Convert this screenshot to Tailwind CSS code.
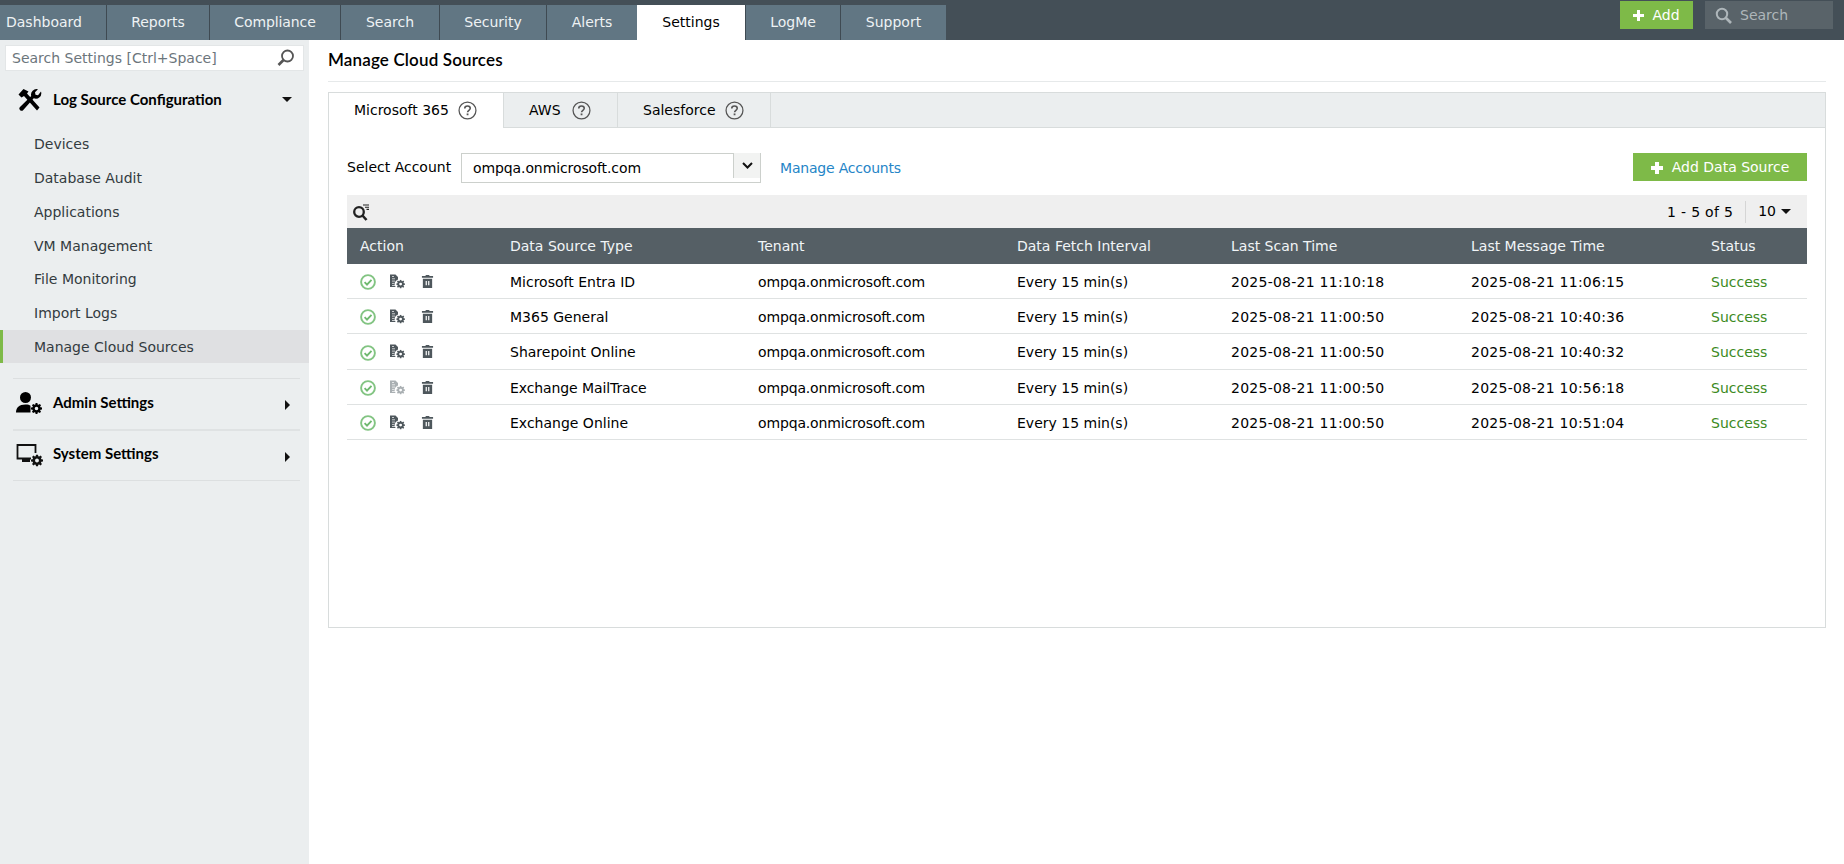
<!DOCTYPE html>
<html lang="en">
<head>
    <meta charset="UTF-8" />
    <title>Manage Cloud Sources</title>
    <script src="https://cdn.jsdelivr.net/npm/@tailwindcss/browser@4"></script>
</head>
<body class="h-[864px] overflow-hidden bg-white font-['DejaVu_Sans',sans-serif] text-[14px] text-black">
    <!-- shared icons -->
    <svg class="hidden">
        <symbol id="gear" viewBox="0 0 16 16">
            <path fill-rule="evenodd" d="M6.7 0h2.6l.4 2.2 1.2.5L12.8 1.4l1.8 1.8-1.3 1.9.5 1.2 2.2.4v2.6l-2.2.4-.5 1.2 1.3 1.9-1.8 1.8-1.9-1.3-1.2.5-.4 2.2H6.7l-.4-2.2-1.2-.5-1.9 1.3-1.8-1.8 1.3-1.9-.5-1.2L0 9.3V6.7l2.2-.4.5-1.2-1.3-1.9 1.8-1.8 1.9 1.3 1.2-.5zM8 5.4a2.6 2.6 0 1 0 0 5.2 2.6 2.6 0 0 0 0-5.2z"/>
        </symbol>
        <symbol id="help" viewBox="0 0 18 18">
            <circle cx="9" cy="9" r="8" fill="none" stroke="#555" stroke-width="1.2"/>
            <path d="M6.400 7.100c0-1.500 1.100-2.400 2.600-2.400s2.600.9 2.600 2.200c0 1.900-2.500 1.900-2.500 3.700" fill="none" stroke="#555" stroke-width="1.500"/>
            <rect x="8.200" y="11.800" width="1.700" height="1.700" fill="#555"/>
        </symbol>
        <symbol id="check" viewBox="0 0 16 16">
            <circle cx="8" cy="8" r="6.900" fill="none" stroke="#82c482" stroke-width="1.900"/>
            <path d="M4.600 8.200l2.400 2.400 4.500-4.700" fill="none" stroke="#6fb96f" stroke-width="1.900"/>
        </symbol>
        <symbol id="config" viewBox="0 0 15 15">
            <path d="M0 .5h5.500L8 3v2.500A4.800 4.800 0 0 0 5.600 13H0z"/>
            <path d="M2 2.500h2M2 4.800h3M2 7.100h3M2 9.400h2.500M2 11.500h3" stroke="#fff" stroke-width=".7"/>
            <use href="#gear" x="6.200" y="5.700" width="8.800" height="8.800"/>
        </symbol>
        <symbol id="trash" viewBox="0 0 12 14">
            <path d="M4 0h4v1h4v2H0V1h4zM1 4h10v10H1zM4 6.500v4.500h1.300V6.500zM6.700 6.500v4.500H8V6.500z" fill-rule="evenodd"/>
        </symbol>
    </svg>

    <!-- top bar -->
    <header class="flex h-10 items-end justify-between bg-[#444f57]">
        <nav class="flex h-[35px] text-[#eef2f4]">
            <a class="flex w-[107px] items-center border-r border-[#3f4a52] bg-[#617683] pl-[6px]">Dashboard</a>
            <a class="flex w-[103px] items-center justify-center border-r border-[#3f4a52] bg-[#617683]">Reports</a>
            <a class="flex w-[131px] items-center justify-center border-r border-[#3f4a52] bg-[#617683] tracking-[-.1px]">Compliance</a>
            <a class="flex w-[99px] items-center justify-center border-r border-[#3f4a52] bg-[#617683]">Search</a>
            <a class="flex w-[107px] items-center justify-center border-r border-[#3f4a52] bg-[#617683]">Security</a>
            <a class="flex w-[90px] items-center justify-center bg-[#617683]">Alerts</a>
            <a class="flex w-[109px] items-center justify-center border-r border-[#3f4a52] bg-white text-black">Settings</a>
            <a class="flex w-[95px] items-center justify-center border-r border-[#3f4a52] bg-[#617683]">LogMe</a>
            <a class="flex w-[105px] items-center justify-center bg-[#617683]">Support</a>
        </nav>
        <div class="flex h-10 items-start pt-px pr-[11px]">
            <button class="flex h-[28px] w-[73px] items-center justify-center gap-[8px] bg-[#7eba48] text-white">
                <svg class="size-[11px]" viewBox="0 0 11 11" fill="#fff"><path d="M4 0h3v4h4v3H7v4H4V7H0V4h4z"/></svg>
                Add
            </button>
            <div class="ml-3 flex h-[28px] w-[128px] items-center gap-[8px] bg-[#596369] pl-[10px] text-[#aeb6ba]">
                <svg class="size-[17px]" viewBox="0 0 17 17" fill="none" stroke="#aeb6ba"><circle cx="7" cy="7" r="5.200" stroke-width="2"/><path d="M11 11l5 5" stroke-width="2.600"/></svg>
                Search
            </div>
        </div>
    </header>

    <div class="flex h-[824px]">
        <!-- sidebar -->
        <aside class="w-[309px] shrink-0 bg-[#ebeeef] text-[#333b40]">
            <div class="mx-[5px] mt-[5px] flex h-[26px] w-[299px] items-center justify-between border border-[#e3e6e7] bg-white pr-[8px] pl-[6px] text-[#6c767c]">
                <span class="pt-px">Search Settings [Ctrl+Space]</span>
                <svg class="size-[18px]" viewBox="0 0 18 18" fill="none" stroke="#555"><circle cx="10.500" cy="7" r="5.500" stroke-width="1.800"/><path d="M6.500 11L1.500 16" stroke-width="2.600"/></svg>
            </div>

            <div class="relative mt-[13px] flex h-[31px] items-center font-['Lato',sans-serif] text-[15px] font-bold text-black">
                <svg class="ml-[18px] size-[24px]" viewBox="0 0 24 24">
                    <path d="M5.500 1L10.500 3.500 9 5.500 21.500 19.500 19 22.500 6 8 3.500 9.500.500 6.500z"/>
                    <path d="M23 3.500a5.500 5.500 0 0 1-7.300 6.800L5.300 22a2 2 0 0 1-3.300-3l11.200-11A5.500 5.500 0 0 1 20 1.300l-3 3 .5 2.500 2.500.5z"/>
                </svg>
                <span class="ml-[11px]">Log Source Configuration</span>
                <span class="absolute top-[13px] left-[282px] size-0 border-x-[5.500px] border-t-[5px] border-x-transparent border-t-[#111]"></span>
            </div>

            <ul class="mt-[12px] flex flex-col">
                <li class="flex h-[34px] items-center pl-[34px]">Devices</li>
                <li class="flex h-[34px] items-center pl-[34px]">Database Audit</li>
                <li class="flex h-[34px] items-center pl-[34px]">Applications</li>
                <li class="flex h-[34px] items-center pl-[34px]">VM Management</li>
                <li class="flex h-[33px] items-center pl-[34px]">File Monitoring</li>
                <li class="flex h-[34px] items-center pl-[34px]">Import Logs</li>
                <li class="flex h-[33px] items-center border-l-[3px] border-[#7eba48] bg-[#dfe0e2] pt-[2px] pl-[31px]">Manage Cloud Sources</li>
            </ul>

            <div class="mt-[15px] mr-[9px] ml-[13px] border-t border-[#dcdfe0]"></div>
            <div class="relative flex h-[50px] items-center font-['Lato',sans-serif] text-[15px] font-bold text-black">
                <svg class="ml-[16px] size-[26px]" viewBox="0 0 26 26">
                    <circle cx="9.500" cy="6.500" r="5.500"/>
                    <path d="M0 21.500c0-5 3-8 9.500-8 2.500 0 4 .5 5 1.200v6.800z"/>
                    <use href="#gear" x="15" y="12" width="11" height="11"/>
                </svg>
                <span class="ml-[11px] -mt-[4px]">Admin Settings</span>
                <span class="absolute top-[21px] left-[285px] size-0 border-y-[5px] border-l-[5px] border-y-transparent border-l-[#111]"></span>
            </div>
            <div class="mr-[9px] ml-[13px] border-t-2 border-[#dfe2e3]"></div>
            <div class="relative flex h-[49px] items-center font-['Lato',sans-serif] text-[15px] font-bold text-black">
                <svg class="ml-[16px] size-[27px]" viewBox="0 0 27 27" fill="none">
                    <path d="M15 16.500H1.500V3h18v8" stroke="#111" stroke-width="1.800"/>
                    <path d="M6 20h8v-3H6z" fill="#111"/>
                    <use href="#gear" x="15" y="12.500" width="12" height="12" fill="#111"/>
                </svg>
                <span class="ml-[10px] -mt-[4px]">System Settings</span>
                <span class="absolute top-[21px] left-[285px] size-0 border-y-[5px] border-l-[5px] border-y-transparent border-l-[#111]"></span>
            </div>
            <div class="mr-[9px] ml-[13px] border-t border-[#dcdfe0]"></div>
        </aside>

        <!-- main -->
        <main class="ml-[19px] w-[1498px]">
            <h1 class="flex h-[42px] items-center border-b border-[#e6e9ea] pb-[1px] font-['Lato',sans-serif] text-[17px] font-semibold tracking-[.15px]">Manage Cloud Sources</h1>

            <section class="mt-[10px] h-[536px] border border-[#d8dcdc]">
                <div class="flex h-[35px] border-b border-[#d8dcdc] bg-[#ebeeef]">
                    <div class="-mb-px flex h-[35px] w-[175px] items-center gap-[9px] border-r border-[#d8dcdc] bg-white pl-[25px]">
                        Microsoft 365
                        <svg class="size-[19px]"><use href="#help"/></svg>
                    </div>
                    <div class="flex w-[114px] items-center gap-[11px] border-r border-[#d8dcdc] pl-[25px]">
                        AWS
                        <svg class="size-[19px]"><use href="#help"/></svg>
                    </div>
                    <div class="flex w-[153px] items-center gap-[9px] border-r border-[#d8dcdc] pl-[25px]">
                        Salesforce
                        <svg class="size-[19px]"><use href="#help"/></svg>
                    </div>
                </div>

                <div class="px-[18px]">
                    <div class="mt-[25px] flex h-[30px] items-center">
                        <span class="-mt-[2px] w-[114px]">Select Account</span>
                        <div class="flex h-[30px] w-[300px] items-center border border-[#ccd0cc] pl-[11px] text-sm tracking-[-.1px]">
                            <span class="flex-1">ompqa.onmicrosoft.com</span>
                            <span class="flex h-[25px] w-[27px] -translate-y-[1px] items-center justify-center self-start border-l border-[#ccd0cc] bg-[#f2f3f2]">
                                <svg class="size-[11px]" viewBox="0 0 11 11" fill="none" stroke="#111" stroke-width="2"><path d="M1 3l4.500 4.500L10 3"/></svg>
                            </span>
                        </div>
                        <a class="ml-[19px] tracking-[-.2px] text-[#2585c7]">Manage Accounts</a>
                        <button class="ml-auto -mt-[2px] flex h-[28px] w-[174px] items-center justify-center gap-[9px] bg-[#7eba48] pt-px text-white">
                            <svg class="size-[12px]" viewBox="0 0 12 12" fill="#fff"><path d="M4 0h4v4h4v4H8v4H4V8H0V4h4z"/></svg>
                            Add Data Source
                        </button>
                    </div>

                    <div class="mt-[12px] flex h-[33px] items-center justify-between bg-[#efefef] pr-[16px] pl-[5px]">
                        <svg class="size-[18px]" viewBox="0 0 18 18" fill="none" stroke="#222">
                            <circle cx="7" cy="9" r="4.800" stroke-width="2.300"/>
                            <path d="M10.500 12.500l4 4.500" stroke-width="2.600"/>
                            <path d="M11 2h6M13 4.200h4M14.500 6.400h2.500" stroke-width="1.100"/>
                        </svg>
                        <div class="flex items-center">
                            <span class="pt-[2px] tracking-[.3px]">1 - 5 of 5</span>
                            <span class="mx-[12px] h-[22px] border-l border-[#d5d5d5]"></span>
                            <span>10</span>
                            <span class="ml-[5px] size-0 border-x-[5px] border-t-[5px] border-x-transparent border-t-[#111]"></span>
                        </div>
                    </div>

                    <table class="w-[1460px] table-fixed border-collapse">
                        <colgroup>
                            <col class="w-[150px]"><col class="w-[261px]"><col class="w-[259px]"><col class="w-[214px]"><col class="w-[240px]"><col class="w-[240px]"><col class="w-[96px]">
                        </colgroup>
                        <thead class="bg-[#555f65] text-left text-[#f1f5f7]">
                            <tr class="h-[36px]">
                                <th class="pl-[13px] font-normal">Action</th>
                                <th class="pl-[13px] font-normal">Data Source Type</th>
                                <th class="font-normal">Tenant</th>
                                <th class="font-normal">Data Fetch Interval</th>
                                <th class="font-normal">Last Scan Time</th>
                                <th class="font-normal">Last Message Time</th>
                                <th class="font-normal">Status</th>
                            </tr>
                        </thead>
                        <tbody class="[&_td]:pt-[3px]">
                            <tr class="h-[34px] border-b border-[#dfe2e2]">
                                <td class="pl-[13px]"><span class="flex items-center"><svg class="size-[16px]"><use href="#check"/></svg><svg class="ml-[14px] size-[15px] -translate-y-[1px] fill-[#4e575c]"><use href="#config"/></svg><svg class="ml-[16px] size-[13px] -translate-y-[1px] fill-[#4e575c]"><use href="#trash"/></svg></span></td>
                                <td class="pl-[13px]">Microsoft Entra ID</td>
                                <td class="tracking-[-.15px]">ompqa.onmicrosoft.com</td>
                                <td>Every 15 min(s)</td>
                                <td class="tracking-[.25px]">2025-08-21 11:10:18</td>
                                <td class="tracking-[.25px]">2025-08-21 11:06:15</td>
                                <td class="text-[#3c8a1e]">Success</td>
                            </tr>
                            <tr class="h-[35px] border-b border-[#dfe2e2]">
                                <td class="pl-[13px]"><span class="flex items-center"><svg class="size-[16px]"><use href="#check"/></svg><svg class="ml-[14px] size-[15px] -translate-y-[1px] fill-[#4e575c]"><use href="#config"/></svg><svg class="ml-[16px] size-[13px] -translate-y-[1px] fill-[#4e575c]"><use href="#trash"/></svg></span></td>
                                <td class="pl-[13px]">M365 General</td>
                                <td class="tracking-[-.15px]">ompqa.onmicrosoft.com</td>
                                <td>Every 15 min(s)</td>
                                <td class="tracking-[.25px]">2025-08-21 11:00:50</td>
                                <td class="tracking-[.25px]">2025-08-21 10:40:36</td>
                                <td class="text-[#3c8a1e]">Success</td>
                            </tr>
                            <tr class="h-[36px] border-b border-[#dfe2e2]">
                                <td class="pl-[13px]"><span class="flex items-center"><svg class="size-[16px]"><use href="#check"/></svg><svg class="ml-[14px] size-[15px] -translate-y-[1px] fill-[#4e575c]"><use href="#config"/></svg><svg class="ml-[16px] size-[13px] -translate-y-[1px] fill-[#4e575c]"><use href="#trash"/></svg></span></td>
                                <td class="pl-[13px]">Sharepoint Online</td>
                                <td class="tracking-[-.15px]">ompqa.onmicrosoft.com</td>
                                <td>Every 15 min(s)</td>
                                <td class="tracking-[.25px]">2025-08-21 11:00:50</td>
                                <td class="tracking-[.25px]">2025-08-21 10:40:32</td>
                                <td class="text-[#3c8a1e]">Success</td>
                            </tr>
                            <tr class="h-[35px] border-b border-[#dfe2e2]">
                                <td class="pl-[13px]"><span class="flex items-center"><svg class="size-[16px]"><use href="#check"/></svg><svg class="ml-[14px] size-[15px] -translate-y-[1px] fill-[#aab0b3]"><use href="#config"/></svg><svg class="ml-[16px] size-[13px] -translate-y-[1px] fill-[#4e575c]"><use href="#trash"/></svg></span></td>
                                <td class="pl-[13px] tracking-[-.1px]">Exchange MailTrace</td>
                                <td class="tracking-[-.15px]">ompqa.onmicrosoft.com</td>
                                <td>Every 15 min(s)</td>
                                <td class="tracking-[.25px]">2025-08-21 11:00:50</td>
                                <td class="tracking-[.25px]">2025-08-21 10:56:18</td>
                                <td class="text-[#3c8a1e]">Success</td>
                            </tr>
                            <tr class="h-[35px] border-b border-[#dfe2e2]">
                                <td class="pl-[13px]"><span class="flex items-center"><svg class="size-[16px]"><use href="#check"/></svg><svg class="ml-[14px] size-[15px] -translate-y-[1px] fill-[#4e575c]"><use href="#config"/></svg><svg class="ml-[16px] size-[13px] -translate-y-[1px] fill-[#4e575c]"><use href="#trash"/></svg></span></td>
                                <td class="pl-[13px]">Exchange Online</td>
                                <td class="tracking-[-.15px]">ompqa.onmicrosoft.com</td>
                                <td>Every 15 min(s)</td>
                                <td class="tracking-[.25px]">2025-08-21 11:00:50</td>
                                <td class="tracking-[.25px]">2025-08-21 10:51:04</td>
                                <td class="text-[#3c8a1e]">Success</td>
                            </tr>
                        </tbody>
                    </table>
                </div>
            </section>
        </main>
    </div>
</body>
</html>
